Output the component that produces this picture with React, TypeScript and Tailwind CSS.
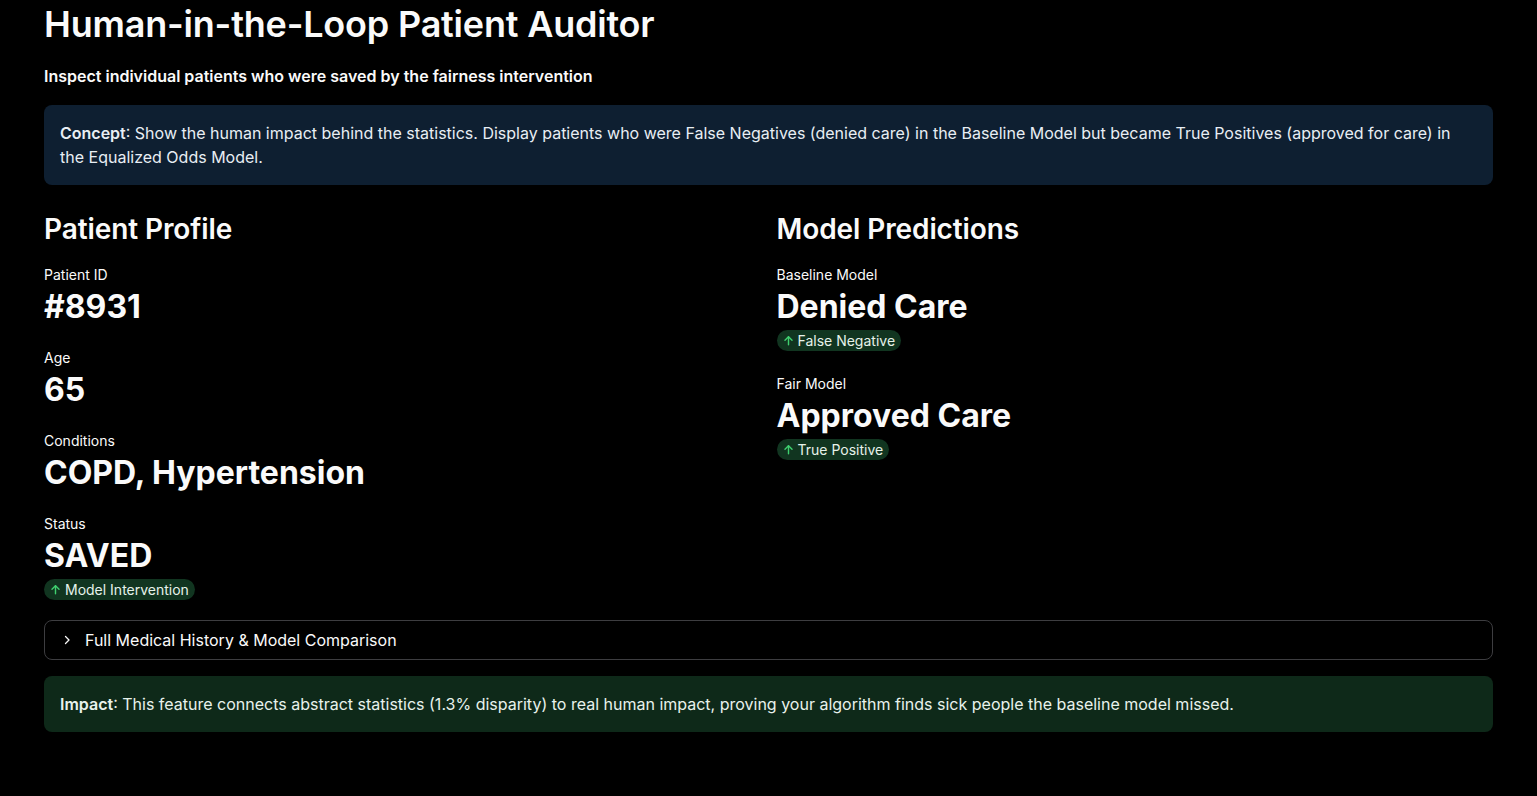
import React from "react";

function Badge({ text }: { text: string }) {
  return (
    <div className="mt-[1px] inline-flex h-[21px] items-center gap-[3px] self-start rounded-full bg-[#113520] pl-[5px] pr-[6px] text-[14px] leading-[20px] text-[#e6f2ea]">
      <svg width="13" height="13" viewBox="0 0 24 24" fill="none" stroke="#3fd06f" strokeWidth="2.6" strokeLinecap="round" strokeLinejoin="round">
        <path d="M12 20V5" />
        <path d="M5.5 11.5 12 5l6.5 6.5" />
      </svg>
      <span>{text}</span>
    </div>
  );
}

function Metric({ label, value, badge }: { label: string; value: string; badge?: string }) {
  return (
    <div className="flex flex-col">
      <div className="text-[14px] leading-[20px] text-[#fafafa]">{label}</div>
      <div className="text-[32px] font-bold leading-[44px] text-[#fafafa]">{value}</div>
      {badge && <Badge text={badge} />}
    </div>
  );
}

export default function App() {
  return (
    <div
      className="min-h-[796px] w-full bg-black px-[44px] text-[#fafafa]"
      style={{ fontFamily: "Inter, 'Noto Sans', sans-serif" }}
    >
      <h1 className="text-[36px] font-semibold leading-[48px] tracking-[-0.2px]">Human-in-the-Loop Patient Auditor</h1>
      <p className="mt-[16px] text-[16px] font-semibold leading-[24px]">
        Inspect individual patients who were saved by the fairness intervention
      </p>
      <div className="mt-[17px] rounded-[8px] bg-[#0e1f31] px-[16px] py-[16px] text-[16px] leading-[24px] text-[#e8eef4]">
        <span className="font-semibold">Concept</span>: Show the human impact behind the statistics. Display patients who were False
        Negatives (denied care) in the Baseline Model but became True Positives (approved for care) in the Equalized Odds Model.
      </div>

      <div className="mt-[26px] grid grid-cols-2 gap-[16px]">
        <div className="flex flex-col">
          <h2 className="text-[28px] font-semibold leading-[36px] tracking-[-0.1px]">Patient Profile</h2>
          <div className="mt-[18px] flex flex-col gap-[19px]">
            <Metric label="Patient ID" value="#8931" />
            <Metric label="Age" value="65" />
            <Metric label="Conditions" value="COPD, Hypertension" />
            <Metric label="Status" value="SAVED" badge="Model Intervention" />
          </div>
        </div>
        <div className="flex flex-col">
          <h2 className="text-[28px] font-semibold leading-[36px] tracking-[-0.1px]">Model Predictions</h2>
          <div className="mt-[18px] flex flex-col gap-[23px]">
            <Metric label="Baseline Model" value="Denied Care" badge="False Negative" />
            <Metric label="Fair Model" value="Approved Care" badge="True Positive" />
          </div>
        </div>
      </div>

      <div className="mt-[20px] flex h-[40px] items-center rounded-[8px] border border-[#3d3d40] pl-[16px]">
        <svg width="12" height="12" viewBox="0 0 24 24" fill="none" stroke="#fafafa" strokeWidth="2.6" strokeLinecap="round" strokeLinejoin="round">
          <path d="M9 5l7 7-7 7" />
        </svg>
        <span className="ml-[12px] text-[16px] leading-[24px] text-[#fafafa]">Full Medical History &amp; Model Comparison</span>
      </div>

      <div className="mt-[16px] rounded-[8px] bg-[#0e2919] px-[16px] py-[16px] text-[16px] leading-[24px] text-[#e8f2ec]">
        <span className="font-semibold">Impact</span>: This feature connects abstract statistics (1.3% disparity) to real human
        impact, proving your algorithm finds sick people the baseline model missed.
      </div>
    </div>
  );
}
